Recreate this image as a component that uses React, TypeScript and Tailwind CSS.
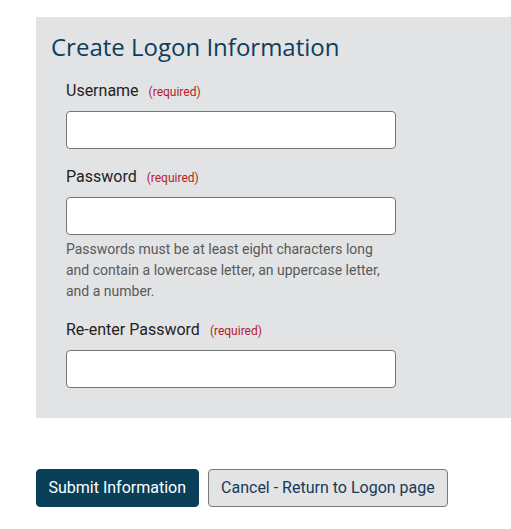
import React from 'react';

const Field = ({ label, help }: { label: string; help?: string }) => (
  <div className="flex flex-col">
    <label className="flex items-baseline h-6 text-[16px] leading-6 text-[#222]">
      {label}
      <span className="ml-[10px] text-[12px] text-[#b3202a]">(required)</span>
    </label>
    <input
      type="text"
      className="mt-2 w-[330px] h-[38px] bg-white border border-[#767676] rounded-[4px] px-2 outline-none"
    />
    {help && (
      <p className="mt-[4px] w-[330px] text-[14px] leading-[21px] text-[#595959]">{help}</p>
    )}
  </div>
);

export default function App() {
  return (
    <div className="min-h-screen bg-white font-['Roboto',sans-serif] pt-[17px]">
      <div className="ml-[36px] bg-[#e2e3e5] pt-[14px] pb-[30px] pl-[15px]">
        <h1 className="font-['Open_Sans',sans-serif] text-[24px] leading-8 text-[#0e3d5c]">
          Create Logon Information
        </h1>
        <div className="mt-4 pl-[15px] flex flex-col gap-4">
          <Field label="Username" />
          <Field
            label="Password"
            help="Passwords must be at least eight characters long and contain a lowercase letter, an uppercase letter, and a number."
          />
          <Field label="Re-enter Password" />
        </div>
      </div>
      <div className="ml-[36px] mt-[51px] flex gap-[9px]">
        <button className="h-[38px] px-[11.5px] rounded-[4px] bg-[#0a3f5a] border border-[#0a3f5a] text-white text-[16px]">
          Submit Information
        </button>
        <button className="h-[38px] px-[12.5px] rounded-[4px] bg-[#e2e3e5] border border-[#7a7a7a] text-[#173a57] text-[16px]">
          Cancel - Return to Logon page
        </button>
      </div>
    </div>
  );
}
